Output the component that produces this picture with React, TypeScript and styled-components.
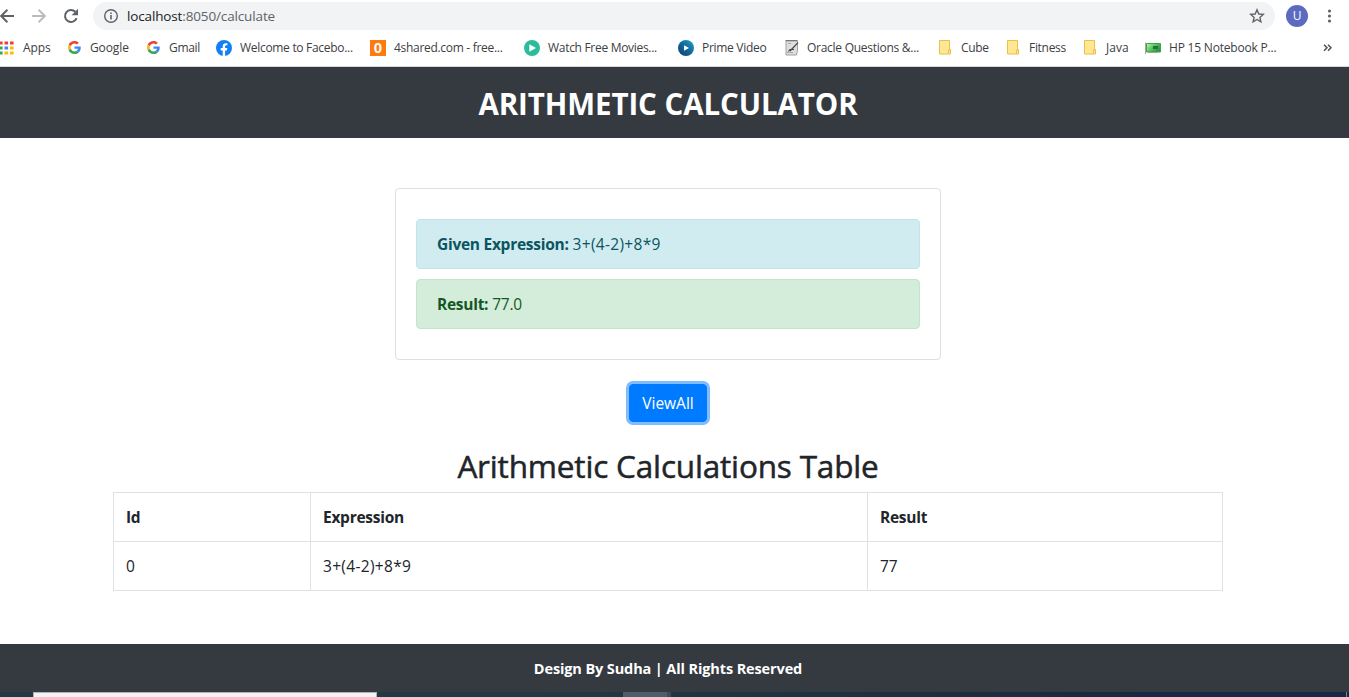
import React from 'react';
import styled, { createGlobalStyle } from 'styled-components';

const GlobalStyle = createGlobalStyle`
  * { box-sizing: border-box; }
  body {
    margin: 0;
    overflow: hidden;
    background: #fff;
    color: #212529;
    font-family: "Open Sans", "Noto Sans", sans-serif;
    font-size: 16px;
    line-height: 24px;
  }
  svg { display: block; }
`;

const Window = styled.div`
  display: flex;
  flex-direction: column;
  width: 1349px;
  height: 697px;
  overflow: hidden;
`;

/* Browser chrome */

const Toolbar = styled.div`
  display: flex;
  align-items: center;
  height: 32px;
  flex: none;
`;

const NavButtons = styled.div`
  display: flex;
  gap: 16px;
  width: 93px;
  margin-left: -1px;
  flex: none;
`;

const AddressBar = styled.div`
  display: flex;
  align-items: center;
  justify-content: space-between;
  width: 1182px;
  height: 28px;
  margin-left: 1px;
  padding: 0 10px;
  border-radius: 14px;
  background: #f1f3f4;
`;

const Address = styled.div`
  display: flex;
  align-items: center;
  gap: 8px;
`;

const Url = styled.span`
  color: #5f6368;
  font-size: 13.5px;
  letter-spacing: -0.14px;
  line-height: 20px;
`;

const Host = styled.span`
  color: #202124;
`;

const Avatar = styled.div`
  width: 22px;
  height: 22px;
  margin-left: 11px;
  border-radius: 50%;
  background: #5c6bc0;
  color: #fff;
  font-size: 12px;
  line-height: 22px;
  text-align: center;
`;

const MenuButton = styled.div`
  margin-left: 19px;
`;

const BookmarksBar = styled.div`
  display: flex;
  align-items: center;
  height: 35px;
  padding-bottom: 3px;
  flex: none;
  border-bottom: 1px solid #d5d9dd;
`;

const Bookmark = styled.div<{ $width: number; $gap?: number }>`
  display: flex;
  align-items: center;
  gap: ${(p) => p.$gap ?? 8}px;
  width: ${(p) => p.$width}px;
  flex: none;
`;

const BookmarkLabel = styled.span<{ $spacing?: number }>`
  color: #3c4043;
  font-size: 12px;
  line-height: 16px;
  letter-spacing: ${(p) => p.$spacing ?? -0.3}px;
  white-space: nowrap;
`;

const FileBadge = styled.span`
  display: flex;
  align-items: center;
  justify-content: center;
  width: 16px;
  height: 16px;
  background: #ff7a0f;
  color: #fff;
  font: 700 15px/16px "Liberation Sans Narrow", "Liberation Sans", sans-serif;
`;

/* Page */

const PageHeader = styled.header`
  height: 71px;
  padding: 19px 13px 0 0;
  flex: none;
  background: #343a40;
  text-align: center;
`;

const SiteTitle = styled.h1`
  margin: 0;
  color: #fff;
  font-size: 29.5px;
  font-weight: 700;
  line-height: 36px;
  letter-spacing: -0.08px;
`;

const Main = styled.main`
  display: flex;
  flex-direction: column;
  align-items: center;
  height: 506px;
  padding: 50px 13px 0 0;
  flex: none;
`;

const Card = styled.section`
  display: flex;
  flex-direction: column;
  gap: 10px;
  width: 546px;
  height: 172px;
  padding: 30px 20px;
  border: 1px solid #dfdfdf;
  border-radius: 4px;
`;

const alertTones = {
  info: { background: '#d1ecf1', border: '#bee5eb', color: '#0c5460' },
  success: { background: '#d4edda', border: '#c3e6cb', color: '#155724' },
};

const Alert = styled.div<{ $tone: keyof typeof alertTones }>`
  display: flex;
  align-items: center;
  gap: 4px;
  height: 50px;
  padding: 0 20px;
  border: 1px solid ${(p) => alertTones[p.$tone].border};
  border-radius: 4px;
  background: ${(p) => alertTones[p.$tone].background};
  color: ${(p) => alertTones[p.$tone].color};
`;

const Strong = styled.strong`
  font-size: 15.5px;
  font-weight: 700;
  letter-spacing: -0.27px;
`;

const Value = styled.span<{ $spacing?: number }>`
  font-size: 15.5px;
  letter-spacing: ${(p) => p.$spacing ?? 0.32}px;
`;

const ViewButton = styled.button`
  width: 78px;
  height: 38px;
  margin-top: 24px;
  padding: 0;
  border: 1px solid #007bff;
  border-radius: 4px;
  background: #007bff;
  box-shadow: 0 0 0 3px rgba(0, 123, 255, 0.5);
  color: #fff;
  font: 400 15.5px/24px "Open Sans", sans-serif;
`;

const TableTitle = styled.h2`
  margin: 25px 0 7px;
  color: #212529;
  font-size: 31.5px;
  font-weight: 400;
  line-height: 38px;
  letter-spacing: -0.17px;
  -webkit-text-stroke: 0.5px #212529;
`;

const Table = styled.table`
  width: 1110px;
  border-collapse: collapse;
  table-layout: fixed;
  text-align: left;
`;

const Column = styled.col<{ $width: number }>`
  width: ${(p) => p.$width}px;
`;

const Cell = styled.td`
  height: 49px;
  padding: 0 12px;
  border: 1px solid #dee2e6;
`;

const PageFooter = styled.footer`
  height: 48px;
  padding: 13px 13px 0 0;
  flex: none;
  background: #343a40;
  color: #fff;
  font-size: 14.5px;
  font-weight: 700;
  letter-spacing: -0.12px;
  text-align: center;
`;

/* Desktop taskbar */

const Taskbar = styled.div`
  display: flex;
  height: 5px;
  flex: none;
  background: linear-gradient(90deg, #203a43, #1f3a43 40%, #1c3040 65%, #1a2744 85%, #1a2744);
`;

const SearchBox = styled.div`
  width: 344px;
  margin-left: 33px;
  border: 1px solid #b3b3b3;
  border-bottom: 0;
  background: #f2f2f2;
`;

const ActiveTask = styled.div`
  width: 48px;
  margin-left: 246px;
  border-right: 4px solid #3b4d57;
  background: #4b5f69;
`;

const DesktopEdge = styled.div`
  width: 1px;
  margin: 0 2px 0 auto;
  background: #7a8296;
`;

const Back = () => (
  <svg width="16" height="16" viewBox="0 0 16 16" fill="none" stroke="#5f6368" strokeWidth="2">
    <path d="M15 8H2.4M8.4 1.8 2.2 8l6.2 6.2" />
  </svg>
);

const Forward = () => (
  <svg width="16" height="16" viewBox="0 0 16 16" fill="none" stroke="#babcbe" strokeWidth="2">
    <path d="M1 8h12.6M7.6 1.8 13.8 8l-6.2 6.2" />
  </svg>
);

const Reload = () => (
  <svg width="16" height="16" viewBox="0 0 16 16">
    <path d="M13.6 10.2A6 6 0 1 1 12.3 3.8" fill="none" stroke="#5f6368" strokeWidth="2" />
    <path d="M15 .8v6.4H8.6z" fill="#5f6368" />
  </svg>
);

const Info = () => (
  <svg width="16" height="16" viewBox="0 0 16 16">
    <circle cx="8" cy="8" r="6.3" fill="none" stroke="#5f6368" strokeWidth="1.4" />
    <path d="M7.2 7.1h1.6v4.3H7.2zM7.2 4.4h1.6V6H7.2z" fill="#5f6368" />
  </svg>
);

const Star = () => (
  <svg width="16" height="16" viewBox="0 0 16 16" fill="none" stroke="#5f6368" strokeWidth="1.4">
    <path d="M8 1.8 9.8 6l4.5.4-3.4 3 1 4.4L8 11.5l-3.9 2.3 1-4.4-3.4-3L6.2 6z" />
  </svg>
);

const Dots = () => (
  <svg width="5" height="16" viewBox="0 0 5 16" fill="#5f6368">
    <circle cx="2.5" cy="3" r="1.6" />
    <circle cx="2.5" cy="8" r="1.6" />
    <circle cx="2.5" cy="13" r="1.6" />
  </svg>
);

const gridColors = ['#ea4335', '#ea4335', '#ea4335', '#34a853', '#4285f4', '#fbbc05', '#34a853', '#fbbc05', '#fbbc05'];

const AppsGrid = () => (
  <svg width="14" height="14" viewBox="0 0 14 14">
    {gridColors.map((color, i) => (
      <rect key={i} x={-1 + (i % 3) * 5.5} y={0.5 + Math.floor(i / 3) * 5} width="3.6" height="3" fill={color} />
    ))}
  </svg>
);

const GoogleMark = () => (
  <svg width="13" height="13" viewBox="0 0 48 48">
    <path fill="#EA4335" d="M24 9.5c3.54 0 6.71 1.22 9.21 3.6l6.85-6.85C35.9 2.38 30.47 0 24 0 14.62 0 6.51 5.38 2.56 13.22l7.98 6.19C12.43 13.72 17.74 9.5 24 9.5z" />
    <path fill="#4285F4" d="M46.98 24.55c0-1.57-.15-3.09-.38-4.55H24v9.02h12.94c-.58 2.96-2.26 5.48-4.78 7.18l7.73 6c4.51-4.18 7.09-10.36 7.09-17.65z" />
    <path fill="#FBBC05" d="M10.53 28.59c-.48-1.45-.76-2.99-.76-4.59s.27-3.14.76-4.59l-7.98-6.19C.92 16.46 0 20.12 0 24s.92 7.54 2.56 10.78l7.97-6.19z" />
    <path fill="#34A853" d="M24 48c6.48 0 11.93-2.13 15.89-5.81l-7.73-6c-2.15 1.45-4.92 2.3-8.16 2.3-6.26 0-11.57-4.22-13.47-9.91l-7.98 6.19C6.51 42.62 14.62 48 24 48z" />
  </svg>
);

const FacebookMark = () => (
  <svg width="16" height="16" viewBox="0 0 16 16">
    <circle cx="8" cy="8" r="8" fill="#1180f5" />
    <path d="M6.7 16v-5.6H4.7V8h2V6.3c0-2 1.2-3.1 3-3.1.9 0 1.7.15 1.7.15v2h-1c-1 0-1.3.6-1.3 1.2V8h2.2l-.35 2.4H9.1V16z" fill="#fff" />
  </svg>
);

const PlayMark = () => (
  <svg width="16" height="16" viewBox="0 0 16 16">
    <circle cx="8" cy="8" r="8" fill="#2bbc9b" />
    <path d="M5.3 4.2 12 8l-6.7 3.8z" fill="#fff" />
  </svg>
);

const PrimeMark = () => (
  <svg width="16" height="16" viewBox="0 0 16 16">
    <defs>
      <linearGradient id="prime" x1="0" y1="1" x2="1" y2="0">
        <stop offset="0" stopColor="#133d6b" />
        <stop offset=".5" stopColor="#11679b" />
        <stop offset="1" stopColor="#1ba4cd" />
      </linearGradient>
    </defs>
    <circle cx="8" cy="8" r="8" fill="url(#prime)" />
    <path d="M6 5.2 11 8l-5 2.8z" fill="#fff" />
  </svg>
);

const NotepadMark = () => (
  <svg width="14" height="16" viewBox="0 0 14 16">
    <path d="M1 1h11.5v9.5l-1 4.500H1z" fill="#dedede" stroke="#a0a0a0" />
    <path d="M3 3.500h3M2 12.500h6" stroke="#aaa" />
    <path d="M3.500 11.500 5 9.500h4M5 11 13 2.600" fill="none" stroke="#444" strokeWidth="1.200" />
    <path d="M.5.5h12" stroke="#777" />
  </svg>
);

const FolderMark = () => (
  <svg width="12" height="15" viewBox="0 0 12 15">
    <path d="M.5.5h10v9h1v4.500H.5z" fill="#ffe794" stroke="#e8c04a" />
    <path d="M9.500 13.500v-3.500h2" fill="none" stroke="#e8c04a" />
  </svg>
);

const CardMark = () => (
  <svg width="16" height="12" viewBox="0 0 16 12">
    <defs>
      <linearGradient id="board" x1="0" y1="0" x2="1" y2="0.600">
        <stop offset="0" stopColor="#c9f2bd" />
        <stop offset=".5" stopColor="#5fc860" />
        <stop offset="1" stopColor="#2b9440" />
      </linearGradient>
    </defs>
    <path d="M.5.5V12" stroke="#a5a5a5" />
    <path d="M1.500 1.500h14V10h-14z" fill="url(#board)" stroke="#3ba34b" />
    <path d="M8 4h5v3H8z" fill="#23733a" />
    <path d="M3 10.500h9" stroke="#9aa59a" />
  </svg>
);

const Chevrons = () => (
  <svg width="9" height="8" viewBox="0 0 9 8" fill="none" stroke="#4d5156" strokeWidth="1.5">
    <path d="m1 .8 3 3-3 3M5 .8l3 3-3 3" />
  </svg>
);

export default function App() {
  return (
    <Window>
      <GlobalStyle />
      <Toolbar>
        <NavButtons>
          <Back />
          <Forward />
          <Reload />
        </NavButtons>
        <AddressBar>
          <Address>
            <Info />
            <Url><Host>localhost</Host>:8050/calculate</Url>
          </Address>
          <Star />
        </AddressBar>
        <Avatar>U</Avatar>
        <MenuButton><Dots /></MenuButton>
      </Toolbar>
      <BookmarksBar>
        <Bookmark $width={68} $gap={9}><AppsGrid /><BookmarkLabel $spacing={-0.1}>Apps</BookmarkLabel></Bookmark>
        <Bookmark $width={79} $gap={9}><GoogleMark /><BookmarkLabel $spacing={-0.1}>Google</BookmarkLabel></Bookmark>
        <Bookmark $width={69} $gap={9}><GoogleMark /><BookmarkLabel>Gmail</BookmarkLabel></Bookmark>
        <Bookmark $width={154}><FacebookMark /><BookmarkLabel>Welcome to Facebo...</BookmarkLabel></Bookmark>
        <Bookmark $width={154}><FileBadge>0</FileBadge><BookmarkLabel>4shared.com - free...</BookmarkLabel></Bookmark>
        <Bookmark $width={154}><PlayMark /><BookmarkLabel>Watch Free Movies...</BookmarkLabel></Bookmark>
        <Bookmark $width={107}><PrimeMark /><BookmarkLabel>Prime Video</BookmarkLabel></Bookmark>
        <Bookmark $width={154}><NotepadMark /><BookmarkLabel $spacing={-0.27}>Oracle Questions &amp;...</BookmarkLabel></Bookmark>
        <Bookmark $width={68} $gap={10}><FolderMark /><BookmarkLabel>Cube</BookmarkLabel></Bookmark>
        <Bookmark $width={77} $gap={10}><FolderMark /><BookmarkLabel>Fitness</BookmarkLabel></Bookmark>
        <Bookmark $width={61} $gap={10}><FolderMark /><BookmarkLabel $spacing={0}>Java</BookmarkLabel></Bookmark>
        <Bookmark $width={178}><CardMark /><BookmarkLabel $spacing={-0.2}>HP 15 Notebook P...</BookmarkLabel></Bookmark>
        <Chevrons />
      </BookmarksBar>

      <PageHeader>
        <SiteTitle>ARITHMETIC CALCULATOR</SiteTitle>
      </PageHeader>
      <Main>
        <Card>
          <Alert $tone="info">
            <Strong>Given Expression:</Strong>
            <Value>3+(4-2)+8*9</Value>
          </Alert>
          <Alert $tone="success">
            <Strong>Result:</Strong>
            <Value $spacing={-0.3}>77.0</Value>
          </Alert>
        </Card>
        <ViewButton>ViewAll</ViewButton>
        <TableTitle>Arithmetic Calculations Table</TableTitle>
        <Table>
          <colgroup>
            <Column $width={197} />
            <Column $width={557} />
            <Column $width={355} />
          </colgroup>
          <tbody>
            <tr>
              <Cell as="th"><Strong>Id</Strong></Cell>
              <Cell as="th"><Strong>Expression</Strong></Cell>
              <Cell as="th"><Strong>Result</Strong></Cell>
            </tr>
            <tr>
              <Cell><Value>0</Value></Cell>
              <Cell><Value>3+(4-2)+8*9</Value></Cell>
              <Cell><Value $spacing={-0.2}>77</Value></Cell>
            </tr>
          </tbody>
        </Table>
      </Main>
      <PageFooter>Design By Sudha | All Rights Reserved</PageFooter>
      <Taskbar>
        <SearchBox />
        <ActiveTask />
        <DesktopEdge />
      </Taskbar>
    </Window>
  );
}
